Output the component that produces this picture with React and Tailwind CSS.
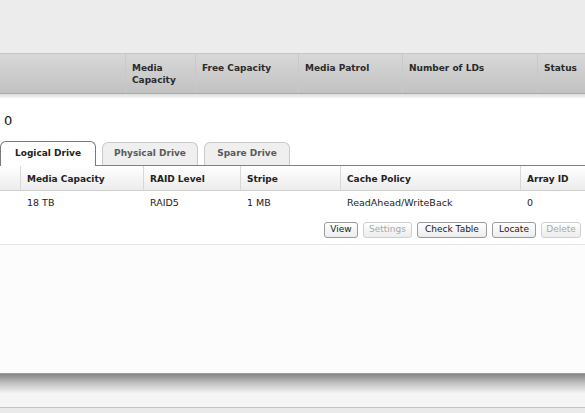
import React from 'react';

const font = { fontFamily: '"DejaVu Sans", Verdana, sans-serif' };

const topCols = [
    { w: 'w-[125px]', label: '' },
    { w: 'w-[70px]', label: 'Media Capacity' },
    { w: 'w-[103px]', label: 'Free Capacity' },
    { w: 'w-[104px]', label: 'Media Patrol' },
    { w: 'w-[135px]', label: 'Number of LDs' },
    { w: 'flex-1', label: 'Status' },
];

const ldCols = [
    { w: 'w-[20px]', label: '', value: '' },
    { w: 'w-[123px]', label: 'Media Capacity', value: '18 TB' },
    { w: 'w-[97px]', label: 'RAID Level', value: 'RAID5' },
    { w: 'w-[100px]', label: 'Stripe', value: '1 MB' },
    { w: 'w-[180px]', label: 'Cache Policy', value: 'ReadAhead/WriteBack' },
    { w: 'flex-1', label: 'Array ID', value: '0' },
];

const buttons = [
    { label: 'View', w: 'w-[34px]', on: true },
    { label: 'Settings', w: 'w-[49px]', on: false },
    { label: 'Check Table', w: 'w-[70px]', on: true },
    { label: 'Locate', w: 'w-[44px]', on: true },
    { label: 'Delete', w: 'w-[40px]', on: false },
];

const Tab = ({ label, active }) => (
    <div
        className={
            active
                ? 'h-[25px] w-[96px] -mb-px rounded-t-[6px] border border-b-0 border-[#7a7a7a] bg-white flex items-center justify-center text-[9px] font-bold text-[#222] z-10'
                : 'h-[23px] rounded-t-[6px] border border-b-0 border-[#c9c9c9] bg-[#efefef] flex items-center justify-center text-[9px] font-bold text-[#5a5a5a]'
        }
    >
        {label}
    </div>
);

export default function App() {
    return (
        <div className="w-[585px] h-[413px] overflow-hidden bg-[#fcfcfc] flex flex-col" style={font}>
            <div className="h-[54px] bg-[#ececec] border-b border-[#c6c6c6]" />

            <div className="h-[40px] flex bg-gradient-to-b from-[#d8d8d8] to-[#c2c2c2] border-b border-[#a9a9a9]">
                {topCols.map((c, i) => (
                    <div
                        key={i}
                        className={`${c.w} ${i > 0 ? 'border-l border-[#c9c9c9]' : ''} px-[6px] pt-[8px] text-[9px] leading-[12px] font-bold text-[#2a2a2a]`}
                    >
                        {c.label}
                    </div>
                ))}
            </div>
            <div className="h-[4px] bg-gradient-to-b from-[#dedede] to-[#f4f4f4]" />

            <div className="bg-white pl-[4px] pt-[13px] h-[43px] text-[13px] text-[#111]">0</div>

            <div className="flex items-end gap-[6px] bg-white">
                <Tab label="Logical Drive" active />
                <div className="w-[96px]">
                    <Tab label="Physical Drive" />
                </div>
                <div className="w-[86px]">
                    <Tab label="Spare Drive" />
                </div>
            </div>
            <div className="h-px bg-[#808080]" />

            <div className="h-[25px] flex bg-gradient-to-b from-white to-[#ececec] border-b border-[#cfcfcf]">
                {ldCols.map((c, i) => (
                    <div
                        key={i}
                        className={`${c.w} ${i > 0 ? 'border-l border-[#d8d8d8]' : ''} px-[6px] pt-[3px] flex items-center text-[9px] font-bold text-[#222]`}
                    >
                        {c.label}
                    </div>
                ))}
            </div>
            <div className="h-[24px] flex bg-white">
                {ldCols.map((c, i) => (
                    <div key={i} className={`${c.w} px-[7px] pt-[1px] flex items-center text-[9.5px] text-[#222]`}>
                        {c.value}
                    </div>
                ))}
            </div>

            <div className="h-[30px] bg-white flex items-start pt-[7px] justify-end gap-[5px] pr-[4px] border-b border-[#e3e3e3]">
                {buttons.map((b) => (
                    <div
                        key={b.label}
                        className={`${b.w} h-[16px] rounded-[3px] border flex items-center justify-center text-[9px] bg-gradient-to-b from-white to-[#ececec] ${
                            b.on ? 'border-[#9a9a9a] text-[#1a1a1a]' : 'border-[#cfcfcf] text-[#a8a8a8]'
                        }`}
                    >
                        {b.label}
                    </div>
                ))}
            </div>

            <div className="flex-1 bg-[#fcfcfc]" />

            <div className="h-[20px] bg-gradient-to-b from-[#868686] via-[#c4c4c4] to-[#f2f2f2] border-t border-[#9c9c9c]" />
            <div className="h-[15px] bg-[#f5f5f5] border-b border-[#c4c4c4]" />
            <div className="h-[5px] bg-[#eaeaea]" />
        </div>
    );
}
